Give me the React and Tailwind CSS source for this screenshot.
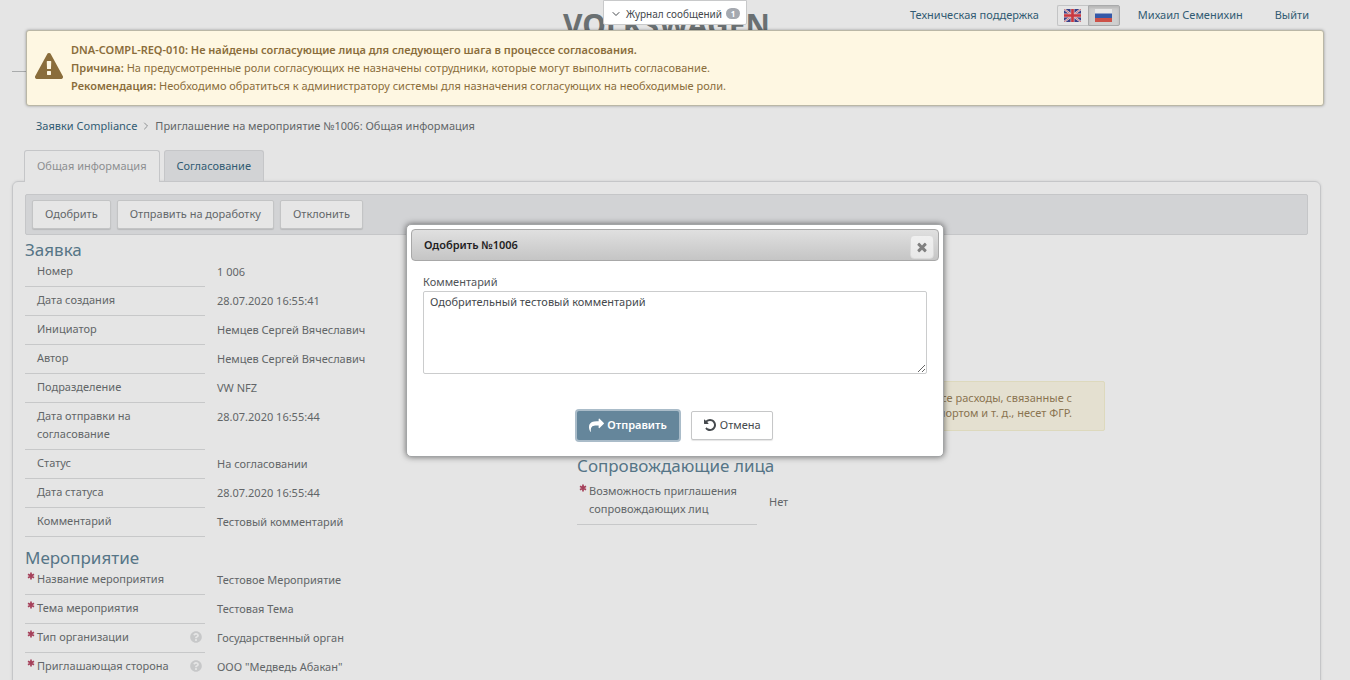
import { FaQuestionCircle } from 'react-icons/fa';
import { ChevronDown, ChevronRight } from 'lucide-react';

const ICONS = {
  warning:
    'M1024 1375v-190q0-14-9.5-23.5t-22.5-9.5h-192q-13 0-22.5 9.5t-9.5 23.5v190q0 14 9.5 23.5t22.5 9.5h192q13 0 22.5-9.5t9.5-23.5zm-2-374l18-459q0-12-10-19-13-11-24-11h-220q-11 0-24 11-10 7-10 21l17 457q0 10 10 16.5t24 6.5h185q14 0 23.5-6.5t10.5-16.5zm-14-934l768 1408q35 63-2 126-17 29-46.5 46t-63.5 17h-1536q-34 0-63.5-17t-46.5-46q-37-63-2-126l768-1408q17-31 47-49t65-18 65 18 47 49z',
  share:
    'M1792 640q0 26-19 45l-512 512q-19 19-45 19t-45-19-19-45v-256h-224q-98 0-175.5 6t-154 21.5-133 42.5-105.5 69.5-80 101-48.5 138.500-17.5 181q0 55 5 123 0 6 2.500 23.500t2.500 26.500q0 15-8.500 25t-23.500 10q-16 0-28-17-7-9-13-22t-13.500-30-10.500-24q-127-285-127-451 0-199 53-333 162-403 875-403h224v-256q0-26 19-45t45-19 45 19l512 512q19 19 19 45z',
  undo:
    'M1664 896q0 156-61 298t-164 245-245 164-298 61q-172 0-327-72.5t-264-204.5q-7-10-6.5-22.5t8.5-20.5l137-138q10-9 25-9 16 2 23 12 73 95 179 147t225 52q104 0 198.5-40.5t163.5-109.5 109.5-163.5 40.5-198.5-40.5-198.5-109.5-163.5-163.5-109.5-198.5-40.5q-98 0-188 35.5t-160 101.5l137 138q31 30 14 69-17 40-59 40h-448q-26 0-45-19t-19-45v-448q0-42 40-59 39-17 69 14l130 129q107-101 244.5-156.5t284.5-55.5q156 0 298 61t245 164 164 245 61 298z',
  close:
    'M1490 1322q0 40-28 68l-136 136q-28 28-68 28t-68-28l-294-294-294 294q-28 28-68 28t-68-28l-136-136q-28-28-28-68t28-68l294-294-294-294q-28-28-28-68t28-68l136-136q28-28 68-28t68 28l294 294 294-294q28-28 68-28t68 28l136 136q28 28 28 68t-28 68l-294 294 294 294q28 28 28 68z',
};

function Icon({ name, className }) {
  return (
    <svg viewBox="0 0 1792 1792" fill="currentColor" aria-hidden="true" className={className}>
      <path d={ICONS[name]} />
    </svg>
  );
}

function RequiredMark() {
  return (
    <svg viewBox="0 0 8 8" className="size-2 text-[#a5405a]" stroke="currentColor" strokeWidth="1.700" aria-hidden="true">
      <path d="M4 0.500V7.500M1 2.200L7 5.800M7 2.200L1 5.800" />
    </svg>
  );
}

function FlagGb() {
  return (
    <svg viewBox="0 0 17 13" className="h-[13px] w-[17px]" aria-hidden="true">
      <rect width="17" height="13" fill="#3a3f86" />
      <path d="M0 0L17 13M17 0L0 13" stroke="#dedee4" strokeWidth="2" />
      <path d="M0 0L17 13M17 0L0 13" stroke="#cc5a60" strokeWidth="0.8" />
      <path d="M8.5 0V13M0 6.5H17" stroke="#e0b9be" strokeWidth="4" />
      <path d="M8.5 0V13M0 6.5H17" stroke="#c9383f" strokeWidth="2.600" />
    </svg>
  );
}

function FlagRu() {
  return (
    <svg viewBox="0 0 17 13" className="h-[13px] w-[17px]" aria-hidden="true">
      <rect width="17" height="13" fill="#e8e8e8" />
      <rect y="4.5" width="17" height="4.5" fill="#3559a8" />
      <rect y="9" width="17" height="4" fill="#cc5148" />
    </svg>
  );
}

const REQUEST = [
  ['Номер', '1 006'],
  ['Дата создания', '28.07.2020 16:55:41'],
  ['Инициатор', 'Немцев Сергей Вячеславич'],
  ['Автор', 'Немцев Сергей Вячеславич'],
  ['Подразделение', 'VW NFZ'],
  ['Дата отправки на согласование', '28.07.2020 16:55:44'],
  ['Статус', 'На согласовании'],
  ['Дата статуса', '28.07.2020 16:55:44'],
  ['Комментарий', 'Тестовый комментарий'],
];

const EVENT = [
  ['Название мероприятия', 'Тестовое Мероприятие', false],
  ['Тема мероприятия', 'Тестовая Тема', false],
  ['Тип организации', 'Государственный орган', true],
  ['Приглашающая сторона', 'ООО "Медведь Абакан"', true],
];

function Row({ label, value, required, help, centered }) {
  return (
    <div className="flex">
      <dt className="flex w-[180px] shrink-0 border-b border-[#c7c8c9] pt-1 pb-1.5">
        <span className="w-3 shrink-0 pt-0.5 pl-0.5">{required && <RequiredMark />}</span>
        <span className="max-w-[148px] grow">{label}</span>
        {help && (
          <button type="button" aria-label="Справка" className="ml-auto flex items-center pr-[3px] text-[#c7c8c9]">
            <FaQuestionCircle className="size-3" />
          </button>
        )}
      </dt>
      <dd className={centered ? 'flex items-center pl-3' : 'pt-[5px] pl-3'}>{value}</dd>
    </div>
  );
}

function Heading({ children }) {
  return <h2 className="pt-1.5 text-[17px] leading-[17px] text-[#567587]">{children}</h2>;
}

const toolButton =
  'h-[29px] rounded-[2px] border border-[#c3c4c5] bg-[#e6e6e6] px-3 pb-0.5 text-[#636669] shadow-[0_1px_1px_rgba(0,0,0,0.12)]';

export default function App() {
  return (
    <div className="relative h-screen overflow-hidden bg-[#e5e5e5] font-['Noto_Sans','Open_Sans',sans-serif] text-[11px] leading-[18px] text-[#626568]">
      <div className="pr-[29px] pl-3">
        <header className="relative h-[72px] border-b border-[#a9abac]">
          <div className="flex justify-center pt-1.5 text-[30px] leading-[38px] font-bold text-[#6a7072]">
            VOLKSWAGEN
          </div>
          <nav className="absolute top-1 right-3 flex h-[22px] items-center gap-[18px] text-[#315b73]">
            <a href="#support">Техническая поддержка</a>
            <div className="flex pt-px">
              <button
                type="button"
                aria-label="English"
                className="flex h-[21px] w-[31px] items-center justify-center rounded-l-[2px] border border-r-0 border-[#c3c4c5]"
              >
                <FlagGb />
              </button>
              <button
                type="button"
                aria-label="Русский"
                className="flex h-[21px] w-8 items-center justify-center rounded-r-[2px] border border-[#a9aaab] bg-[#cfcfcf] shadow-[inset_0_2px_3px_rgba(0,0,0,0.12)]"
              >
                <FlagRu />
              </button>
            </div>
            <a href="#user">Михаил Семенихин</a>
            <a href="#logout" className="pl-3.5">
              Выйти
            </a>
          </nav>
        </header>

        <nav className="flex items-center gap-[3px] pt-[45px] pb-[15px] pl-6">
          <a href="#requests" className="text-[#315b73]">
            Заявки Compliance
          </a>
          <ChevronRight className="size-3 text-[#8d9092]" />
          <span>Приглашение на мероприятие №1006: Общая информация</span>
        </nav>

        <div role="tablist" className="relative flex gap-1 pl-3">
          <button
            type="button"
            role="tab"
            aria-selected="true"
            className="-mb-px h-8 rounded-t-[3px] border border-b-0 border-[#c5c6c8] bg-[#e5e5e5] px-3 pb-px text-[#8d8f91]"
          >
            Общая информация
          </button>
          <button
            type="button"
            role="tab"
            aria-selected="false"
            className="h-[31px] rounded-t-[3px] border border-b-0 border-[#c5c6c8] bg-[#d2d3d5] px-3 text-[#315b73]"
          >
            Согласование
          </button>
        </div>

        <main className="min-h-screen rounded-[6px] border border-[#c5c6c8] p-3 shadow-[0_0_3px_rgba(0,0,0,0.1)]">
          <div className="flex gap-1.5 rounded-[2px] border border-[#c5c6c8] bg-[#d2d3d5] px-1.5 py-[5px]">
            <button type="button" className={toolButton}>
              Одобрить
            </button>
            <button type="button" className={toolButton}>
              Отправить на доработку
            </button>
            <button type="button" className={toolButton}>
              Отклонить
            </button>
          </div>

          <div className="flex">
            <div className="w-[552px] shrink-0">
              <Heading>Заявка</Heading>
              <dl>
                {REQUEST.map(([label, value]) => (
                  <Row key={label} label={label} value={value} />
                ))}
              </dl>
              <div className="pt-1.5">
                <Heading>Мероприятие</Heading>
              </div>
              <dl>
                {EVENT.map(([label, value, help]) => (
                  <Row key={label} label={label} value={value} help={help} required />
                ))}
              </dl>
            </div>

            <div className="w-[528px] pt-[146px]">
              <div className="mb-5 rounded-[2px] border border-[#ddd9bd] bg-[#e4e0d0] pt-2 pb-2.5 pr-8 text-right leading-[15px] text-[#8a7450]">
                Все расходы, связанные с
                <br />
                транспортом и т. д., несет ФГР.
              </div>
              <Heading>Сопровождающие лица</Heading>
              <dl className="pt-1">
                <Row label="Возможность приглашения сопровождающих лиц" value="Нет" required centered />
              </dl>
            </div>
          </div>
        </main>
      </div>

      <div
        role="alert"
        className="absolute inset-x-[26px] top-[30px] flex items-center gap-2 rounded-[3px] border border-[#bab7a6] bg-[#fef7e2] py-2.5 pl-2 text-[#8a6d3b] shadow-[0_0_3px_rgba(0,0,0,0.35)]"
      >
        <Icon name="warning" className="mb-0.5 size-7 shrink-0" />
        <div>
          <p className="font-semibold">
            DNA-COMPL-REQ-010: Не найдены согласующие лица для следующего шага в процессе согласования.
          </p>
          <p>
            <b className="font-semibold">Причина:</b> На предусмотренные роли согласующих не назначены сотрудники,
            которые могут выполнить согласование.
          </p>
          <p>
            <b className="font-semibold">Рекомендация:</b> Необходимо обратиться к администратору системы для назначения
            согласующих на необходимые роли.
          </p>
        </div>
      </div>

      <div className="absolute inset-x-0 top-0 flex justify-center">
        <button
          type="button"
          className="flex h-[25px] items-center gap-1 rounded-b-[2px] border border-[#c8c9ca] bg-white px-1.5 pt-0.5 text-[10px] text-[#45494d]"
        >
          <ChevronDown className="size-3" />
          Журнал сообщений
          <span className="flex h-[11px] w-3.5 items-center justify-center rounded-full bg-[#a5a9b0] text-[8px] font-bold text-white">
            1
          </span>
        </button>
      </div>

      <div className="absolute inset-0 flex items-center justify-center">
        <div
          role="dialog"
          aria-labelledby="dialog-title"
          className="w-[538px] rounded-[5px] border border-[#a3a5a6] bg-white p-1 shadow-[0_0_6px_rgba(0,0,0,0.55)]"
        >
          <div className="flex h-8 items-center justify-between rounded-[4px] border border-[#a8a8a8] bg-linear-to-b from-[#e0e0e0] to-[#c5c5c5] pr-1 pl-3">
            <h1 id="dialog-title" className="font-semibold text-[#1f2122]">
              Одобрить №1006
            </h1>
            <button
              type="button"
              aria-label="Закрыть"
              className="mt-1 flex size-6 items-center justify-center rounded-[4px] border border-[#dadada] bg-linear-to-b from-[#f0f0f0] to-[#e8e8e8] text-[#808080]"
            >
              <Icon name="close" className="size-3.5" />
            </button>
          </div>
          <form className="px-3 pt-3 pb-3" onSubmit={(e) => e.preventDefault()}>
            <label htmlFor="comment" className="block text-[#505458]">
              Комментарий
            </label>
            <textarea
              id="comment"
              defaultValue="Одобрительный тестовый комментарий"
              className="block h-[83px] w-full resize rounded-[2px] border border-[#cbcccd] px-1.5 py-px text-[#45494d]"
            />
            <div className="flex justify-center gap-3 pt-[37px]">
              <button
                type="submit"
                className="flex h-[29px] items-center gap-[3px] rounded-[2px] bg-[#65869b] px-3 font-semibold text-white ring-2 ring-[#aabcc9]"
              >
                <Icon name="share" className="size-[15px]" />
                Отправить
              </button>
              <button
                type="button"
                className="flex h-[29px] items-center gap-[3px] rounded-[2px] border border-[#c6c7c8] bg-white px-[11px] text-[#45494d] shadow-[0_1px_1px_rgba(0,0,0,0.1)]"
              >
                <Icon name="undo" className="size-3.5" />
                Отмена
              </button>
            </div>
          </form>
        </div>
      </div>
    </div>
  );
}
